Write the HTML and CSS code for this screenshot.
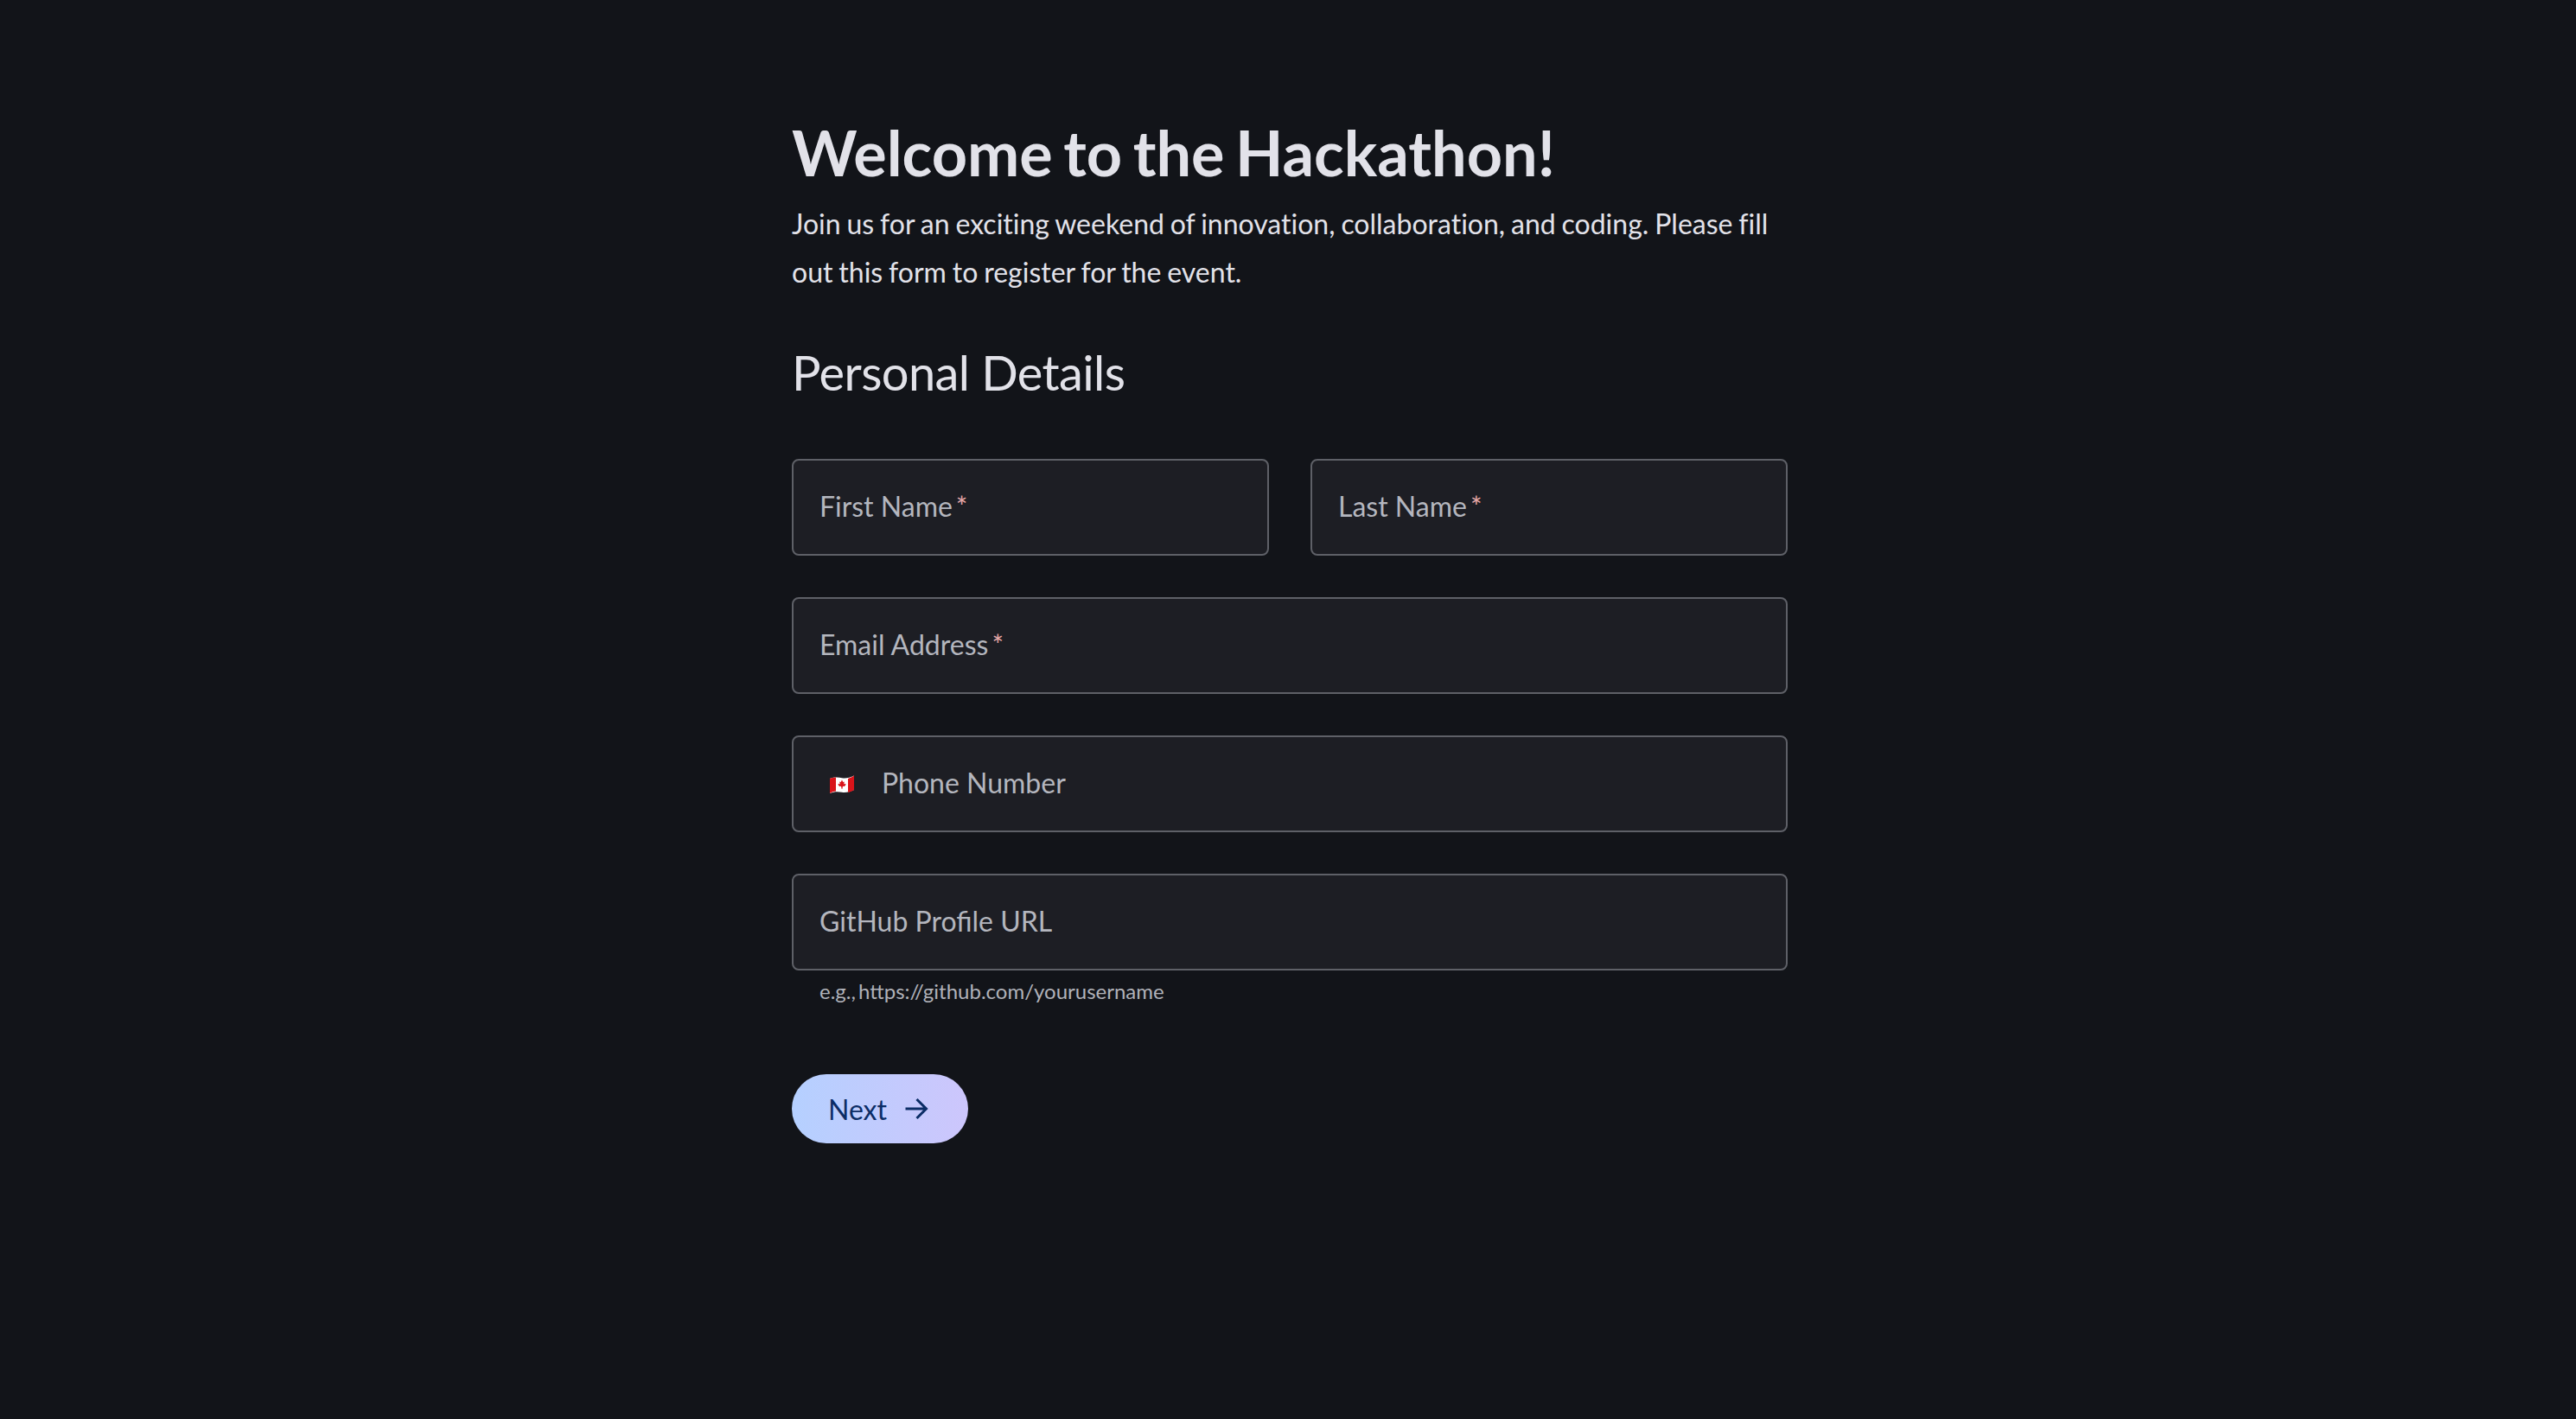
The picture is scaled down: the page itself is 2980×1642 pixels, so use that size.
FILE: index.html
```html
<!DOCTYPE html>
<html lang="en">
<head>
    <meta charset="UTF-8">
    <meta name="viewport" content="width=device-width, initial-scale=1.0">
    <title>Hackathon Registration</title>
    <link rel="stylesheet" href="styles.css">
</head>
<body>
    <main class="page">
        <h1>Welcome to the Hackathon!</h1>
        <p class="intro">Join us for an exciting weekend of innovation, collaboration, and coding. Please fill out this form to register for the event.</p>

        <h2>Personal Details</h2>

        <form class="form">
            <div class="row">
                <label class="field"><span>First Name</span><span class="req">*</span></label>
                <label class="field"><span>Last Name</span><span class="req">*</span></label>
            </div>

            <label class="field"><span>Email Address</span><span class="req">*</span></label>

            <label class="field field-phone">
                <svg class="flag" viewBox="0 0 28 21" aria-hidden="true">
                    <path fill="#fff" d="M0 4 C5 2 10 2.500 14 3.200 C18 4 23 3.200 28 0.500 V17 C23 19.600 18 20.500 14 19.800 C10 19 5 18.700 0 21 Z"/>
                    <path fill="#d9141a" d="M0 4 C2 3.200 5 2.700 7 2.600 V18.600 C5 18.700 2 20 0 21 Z"/>
                    <path fill="#d9141a" d="M21 3.900 C23.500 3.500 26 1.700 28 0.500 V17 C26 18.200 23.500 19.500 21 20 Z"/>
                    <path fill="#d9141a" d="M14 5.500 L15.300 8 L16.800 7.400 L16.200 10.500 L18 9.800 L18.500 11 L16.800 13 L15 12.800 L14.300 16 H13.700 L13 12.800 L11.200 13 L9.500 11 L10 9.800 L11.800 10.500 L11.200 7.400 L12.700 8 Z"/>
                </svg>
                <span>Phone Number</span>
            </label>

            <div>
                <label class="field"><span>GitHub Profile URL</span></label>
                <p class="hint">e.g., https://github.com/yourusername</p>
            </div>
        </form>

        <button class="next" type="button">
            Next
            <svg class="arrow" viewBox="0 0 28 28" aria-hidden="true">
                <path d="M1.500 14 H25 M14.500 3 L25.500 14 L14.500 25"/>
            </svg>
        </button>
    </main>
</body>
</html>
```

FILE: styles.css
```css
/* Global Styling */
body {
    margin: 0;
    padding-left: 4px;
    min-height: 100vh;
    box-sizing: border-box;
    background-color: #121419;
    color: #e2e2e9;
    font-family: Lato, "Liberation Sans", sans-serif;
}

.page {
    width: 1152px;
    margin: 0 auto;
    padding-top: 130px;
    box-sizing: border-box;
}

/* Headings */
h1 {
    margin: 0;
    font-size: 72px;
    line-height: 92px;
    font-weight: 700;
    word-spacing: -5px;
}

.intro {
    margin: 9px 0 0;
    font-size: 32px;
    line-height: 56px;
    font-variant-ligatures: none;
    word-spacing: -1.300px;
}

h2 {
    margin: 52px 0 0;
    font-size: 56px;
    line-height: 72px;
    font-weight: 400;
    letter-spacing: -0.6px;
}

/* Form */
.form {
    display: flex;
    flex-direction: column;
    gap: 48px;
    margin-top: 64px;
}

.row {
    display: grid;
    grid-template-columns: 1fr 1fr;
    gap: 48px;
}

.field {
    display: flex;
    align-items: center;
    height: 112px;
    padding: 0 30px 4px;
    box-sizing: border-box;
    background-color: #1d1e24;
    border: 2px solid #5e6067;
    border-radius: 8px;
    color: #b4b6be;
    font-size: 32px;
}

.req {
    margin-left: 4px;
    color: #e6a8a8;
    font-size: 32px;
}

.flag {
    width: 28px;
    height: 21px;
    margin: 4px 32px 0 12px;
    flex: none;
}

.hint {
    margin: 8px 0 0 32px;
    color: #b0b2b9;
    font-size: 24px;
    line-height: 32px;
    word-spacing: -3px;
}

/* Button */
.next {
    display: flex;
    align-items: center;
    gap: 20px;
    height: 80px;
    margin-top: 80px;
    padding: 0 46px 0 42px;
    background: linear-gradient(90deg, #b5d0ff, #cdc6fc);
    border: none;
    border-radius: 40px;
    color: #0c2d66;
    font-family: inherit;
    font-size: 32px;
}

.arrow {
    width: 28px;
    height: 28px;
    fill: none;
    stroke: currentColor;
    stroke-width: 3;
}
```
